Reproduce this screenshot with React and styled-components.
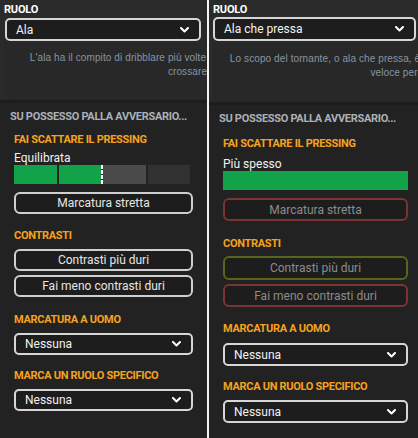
import React from 'react';
import styled, { createGlobalStyle } from 'styled-components';

const Global = createGlobalStyle`
  html, body { margin: 0; padding: 0; background: #ffffff; }
  body { font-family: Roboto, "Liberation Sans", sans-serif; }
  * { box-sizing: border-box; }
`;

const Root = styled.div`
  display: flex;
  gap: 2px;
  width: 418px;
  height: 438px;
  background: #f4f4f4;
`;

const Panel = styled.div`
  width: ${p => p.$w}px;
  flex: none;
  height: 100%;
  background: #222222;
  overflow: hidden;
  display: flex;
  flex-direction: column;
`;

const Header = styled.div`
  background: #2a2a2a;
  padding: 4px 0 0 4px;
  border-bottom: 3px solid #1d1d1d;
`;

const RoleLabel = styled.div`
  font-size: 11px;
  line-height: 12px;
  font-weight: 700;
  color: #ffffff;
  letter-spacing: -0.2px;
  margin-bottom: ${p => p.$mb}px;
`;

const Select = styled.div`
  display: flex;
  align-items: center;
  justify-content: space-between;
  height: ${p => p.$h}px;
  width: ${p => (p.$w ? `${p.$w}px` : '100%')};
  margin-left: ${p => p.$ml || 0}px;
  border: 2px solid #d6d6d6;
  border-radius: 5px;
  background: #1d1d1d;
  padding: 0 10px 0 9px;
  color: #f2f2f2;
  font-size: 12px;
`;

const Chevron = () => (
  <svg width="9" height="6" viewBox="0 0 9 6">
    <polyline points="1,1 4.5,4.5 8,1" fill="none" stroke="#ffffff" strokeWidth="2" strokeLinecap="round" strokeLinejoin="round" />
  </svg>
);

const Card = styled.div`
  width: ${p => p.$w}px;
  height: ${p => p.$h}px;
  background: #282828;
  border-radius: 0 0 6px 6px;
  padding-top: ${p => p.$pt}px;
  font-family: "Liberation Sans", Arial, sans-serif;
  font-size: 10px;
  line-height: 14px;
  letter-spacing: 0.1px;
  color: #8795a3;
  text-align: center;
  white-space: nowrap;
  overflow: hidden;
`;

const CardLine = styled.div``;

const Section = styled.div`
  padding: ${p => p.$pt}px 0 0 10px;
`;

const SectionTitle = styled.div`
  font-size: 11px;
  line-height: 14px;
  font-weight: 700;
  color: #aab1b9;
  letter-spacing: -0.3px;
`;

const Body = styled.div`
  display: flex;
  flex-direction: column;
  width: ${p => p.$w}px;
  margin-left: 14px;
`;

const Heading = styled.div`
  font-size: 11px;
  line-height: 14px;
  font-weight: 700;
  color: #f7a21e;
  letter-spacing: -0.3px;
  margin-top: ${p => p.$mt}px;
  margin-bottom: ${p => p.$mb}px;
`;

const ValueLabel = styled.div`
  font-size: 12px;
  line-height: 14px;
  color: #f2f2f2;
  margin-top: ${p => p.$mt}px;
`;

const SegBar = styled.div`
  position: relative;
  display: grid;
  grid-template-columns: repeat(4, 1fr);
  gap: 2px;
  height: 19px;
  width: 176px;
`;

const Seg = styled.div`
  background: ${p => p.$c};
`;

const Marker = styled.div`
  position: absolute;
  top: 0;
  bottom: 0;
  left: ${p => p.$x}px;
  width: 2px;
  background: repeating-linear-gradient(to bottom, #ffffff 0 4px, transparent 4px 5px);
`;

const FullBar = styled.div`
  height: 19px;
  background: #12a24a;
`;

const Button = styled.div`
  display: flex;
  align-items: center;
  justify-content: center;
  height: ${p => p.$h}px;
  margin-top: ${p => p.$mt}px;
  border: 2px solid ${p => p.$border || '#cfcfcf'};
  border-radius: 6px;
  background: #1d1d1d;
  color: ${p => (p.$dim ? '#8c8c8c' : '#e6e6e6')};
  font-size: 12px;
`;

function Dropdown({ value, h }) {
  return (
    <Select $h={h}>
      <span>{value}</span>
      <Chevron />
    </Select>
  );
}

export default function App() {
  return (
    <>
      <Global />
      <Root>
        <Panel $w={207}>
          <Header>
            <RoleLabel $mb={2}>RUOLO</RoleLabel>
            <Select $h={23} $w={196} $ml={1}>
              <span>Ala</span>
              <Chevron />
            </Select>
            <Card $w={412} $h={59} $pt={10}>
              <CardLine>L'ala ha il compito di dribblare più volte l'avversario diretto e di andare sul fondo</CardLine>
              <CardLine>crossare al centro.</CardLine>
            </Card>
          </Header>
          <Section $pt={7}>
            <SectionTitle>SU POSSESSO PALLA AVVERSARIO...</SectionTitle>
          </Section>
          <Body $w={179}>
            <Heading $mt={9} $mb={0}>FAI SCATTARE IL PRESSING</Heading>
            <ValueLabel $mt={4}>Equilibrata</ValueLabel>
            <SegBar>
              <Seg $c="#12a24a" />
              <Seg $c="#12a24a" />
              <Seg $c="#4b4b4b" />
              <Seg $c="#313131" />
              <Marker $x={87} />
            </SegBar>
            <Button $h={22} $mt={8}>Marcatura stretta</Button>
            <Heading $mt={15} $mb={6}>CONTRASTI</Heading>
            <Button $h={22} $mt={0}>Contrasti più duri</Button>
            <Button $h={22} $mt={4}>Fai meno contrasti duri</Button>
            <Heading $mt={16} $mb={6}>MARCATURA A UOMO</Heading>
            <Dropdown value="Nessuna" h={22} />
            <Heading $mt={14} $mb={6}>MARCA UN RUOLO SPECIFICO</Heading>
            <Dropdown value="Nessuna" h={22} />
          </Body>
        </Panel>
        <Panel $w={209}>
          <Header>
            <RoleLabel $mb={1}>RUOLO</RoleLabel>
            <Select $h={24} $w={203} $ml={0}>
              <span>Ala che pressa</span>
              <Chevron />
            </Select>
            <Card $w={422} $h={61} $pt={11}>
              <CardLine>Lo scopo del tornante, o ala che pressa, è quello di fare pressione in modo costante e</CardLine>
              <CardLine>veloce per gli attaccanti</CardLine>
            </Card>
          </Header>
          <Section $pt={7}>
            <SectionTitle>SU POSSESSO PALLA AVVERSARIO...</SectionTitle>
          </Section>
          <Body $w={185}>
            <Heading $mt={11} $mb={0}>FAI SCATTARE IL PRESSING</Heading>
            <ValueLabel $mt={6}>Più spesso</ValueLabel>
            <FullBar />
            <Button $h={23} $mt={8} $border="#7b3434" $dim>Marcatura stretta</Button>
            <Heading $mt={16} $mb={5}>CONTRASTI</Heading>
            <Button $h={24} $mt={0} $border="#56661c" $dim>Contrasti più duri</Button>
            <Button $h={23} $mt={4} $border="#7b3434" $dim>Fai meno contrasti duri</Button>
            <Heading $mt={15} $mb={7}>MARCATURA A UOMO</Heading>
            <Dropdown value="Nessuna" h={23} />
            <Heading $mt={14} $mb={6}>MARCA UN RUOLO SPECIFICO</Heading>
            <Dropdown value="Nessuna" h={23} />
          </Body>
        </Panel>
      </Root>
    </>
  );
}
